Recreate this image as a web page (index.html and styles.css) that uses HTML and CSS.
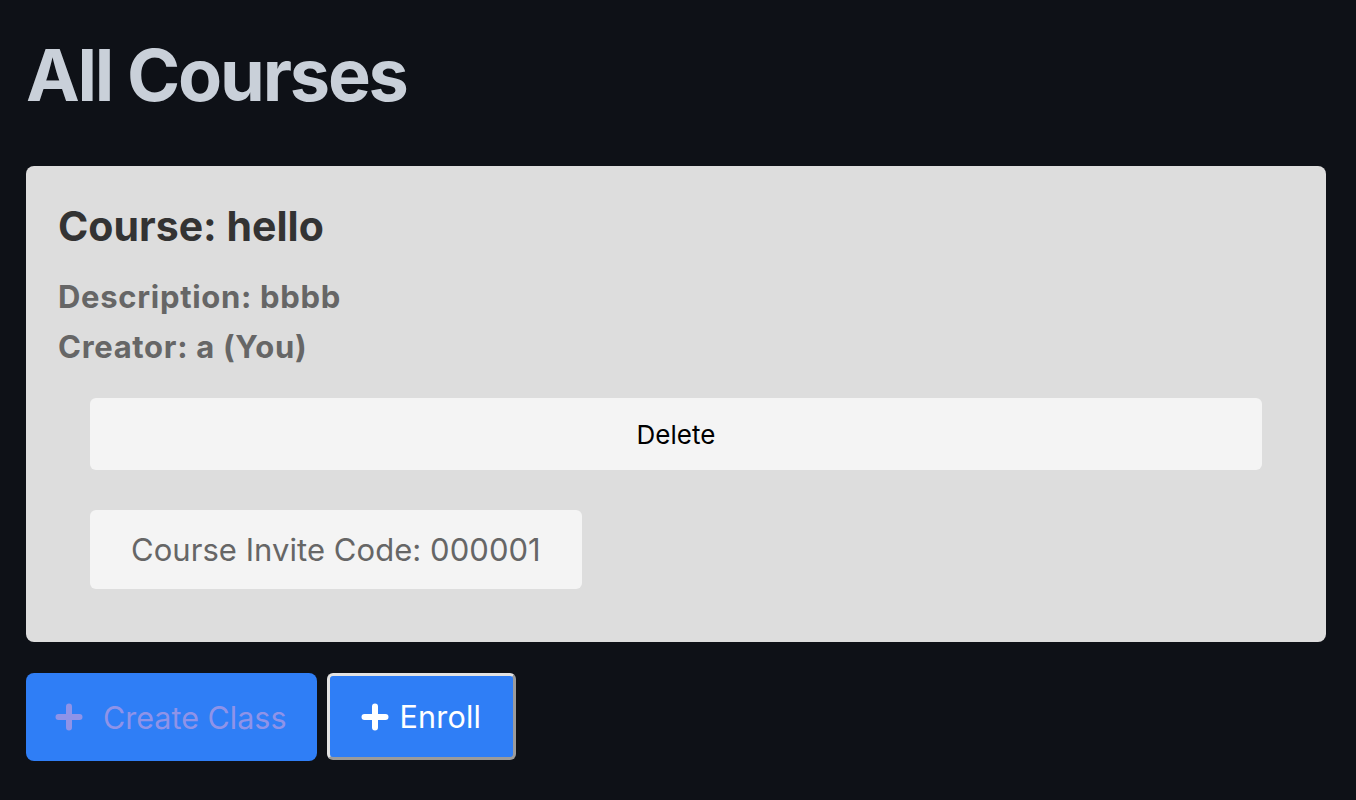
FILE: index.html
```html
<!DOCTYPE html>
<html lang="en">
<head>
<meta charset="utf-8">
<title>All Courses</title>
<link rel="stylesheet" href="styles.css">
</head>
<body>
  <main class="page">
    <h1 class="page-title">All Courses</h1>
    <section class="course-card">
      <h2 class="course-name">Course: hello</h2>
      <p class="course-meta">Description: bbbb</p>
      <p class="course-meta">Creator: a (You)</p>
      <div class="course-actions">
        <button class="btn-delete" type="button">Delete</button>
        <div class="invite-code">Course Invite Code: 000001</div>
      </div>
    </section>
    <div class="toolbar">
      <button class="btn-primary btn-create" type="button">
        <svg class="plus" viewBox="0 0 28 28" aria-hidden="true"><path d="M14 3.5v21M3.5 14h21"/></svg>
        <span>Create Class</span>
      </button>
      <button class="btn-primary btn-enroll" type="button">
        <svg class="plus" viewBox="0 0 28 28" aria-hidden="true"><path d="M14 3.5v21M3.5 14h21"/></svg>
        <span>Enroll</span>
      </button>
    </div>
  </main>
</body>
</html>
```

FILE: styles.css
```css
html, body {
  margin: 0;
  padding: 0;
  background: #0e1117;
}

body {
  font-family: Inter, "Noto Sans", "Liberation Sans", sans-serif;
  height: 800px;
  overflow: hidden;
}

.page {
  padding: 31px 30px 0 26px;
}

.page-title {
  margin: 0;
  font-size: 72px;
  line-height: 87px;
  font-weight: 700;
  letter-spacing: -2.2px;
  color: #c9d0d9;
}

.course-card {
  margin-top: 48px;
  background: #dddddd;
  border-radius: 8px;
  padding: 36px 32px 53px;
}

.course-name {
  margin: 0;
  font-size: 41px;
  line-height: 48px;
  font-weight: 700;
  letter-spacing: 0;
  color: #333333;
}

.course-meta {
  margin: 0;
  font-size: 31px;
  line-height: 50px;
  font-weight: 700;
  letter-spacing: 0.7px;
  color: #666666;
}

.course-name + .course-meta {
  margin-top: 22px;
}

.course-actions {
  margin: 26px 32px 0;
  display: flex;
  flex-direction: column;
  align-items: flex-start;
  gap: 40px;
}

.btn-delete {
  width: 100%;
  height: 72px;
  border: none;
  border-radius: 6px;
  background: #f4f4f4;
  color: #000000;
  font-family: inherit;
  font-size: 26px;
  padding: 0;
}

.invite-code {
  height: 79px;
  display: flex;
  align-items: center;
  padding: 0 41px;
  border-radius: 6px;
  background: #f4f4f4;
  color: #666666;
  font-size: 31px;
  letter-spacing: 0.05px;
}

.toolbar {
  margin-top: 31px;
  display: flex;
  gap: 10px;
  align-items: flex-start;
}

.btn-primary {
  display: flex;
  align-items: center;
  height: 88px;
  background: #2f7ef6;
  border-radius: 8px;
  font-family: inherit;
  font-size: 30.5px;
  padding: 0 30px;
  cursor: pointer;
}

.plus {
  width: 28px;
  height: 28px;
  flex: none;
  fill: none;
  stroke: currentColor;
  stroke-width: 6px;
  stroke-linecap: round;
}

.btn-create {
  border: none;
  color: #8f93e8;
  gap: 20px;
  padding: 0 30px 0 29px;
}

.btn-enroll {
  height: 87px;
  border: 3px solid;
  border-color: #e3e3e3 #9b9b9b #9b9b9b #e3e3e3;
  border-radius: 6px;
  color: #ffffff;
  gap: 11px;
  padding: 0 32px 0 31px;
  letter-spacing: 0.2px;
}
```
